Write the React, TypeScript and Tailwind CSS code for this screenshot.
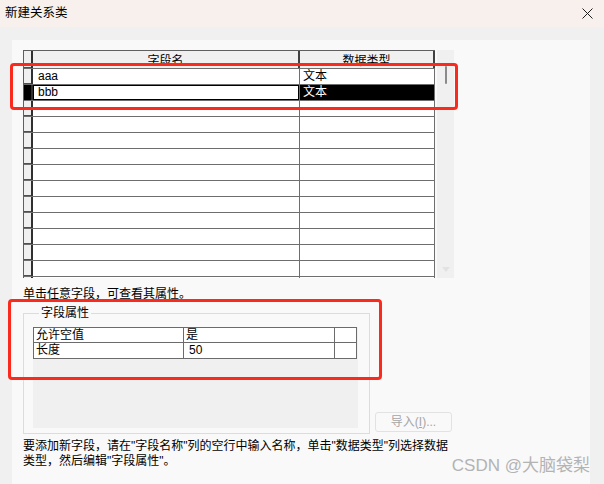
import React from 'react';

const ROWS = [
  { name: 'aaa', type: '文本', selected: false },
  { name: 'bbb', type: '文本', selected: true },
  ...Array.from({ length: 12 }, () => ({ name: '', type: '', selected: false })),
];

function FieldRow({ name, type, selected }: { name: string; type: string; selected: boolean }) {
  return (
    <div className="flex h-[16px] border-b border-[#6e6e6e]">
      <div
        className={
          selected
            ? 'w-[9px] bg-black border-r-2 border-[#303030]'
            : 'w-[9px] bg-[#f0f0f0] border-r-2 border-[#303030] shadow-[inset_0_-1px_0_#505050]'
        }
      />
      <div className="w-[267px] bg-white border-r border-[#6e6e6e]">
        {selected ? (
          <div className="h-full border border-black pl-[4px] leading-[13px]">{name}</div>
        ) : (
          <div className="h-full pl-[5px] leading-[15px]">{name}</div>
        )}
      </div>
      <div
        className={
          selected
            ? 'w-[135px] bg-black text-white pl-[3px] leading-[15px] border-r border-[#6e6e6e]'
            : 'w-[135px] bg-white pl-[3px] leading-[15px] border-r border-[#6e6e6e]'
        }
      >
        {type}
      </div>
    </div>
  );
}

export default function App() {
  return (
    <div className="relative w-[604px] h-[484px] overflow-hidden bg-[#f0f0f0] text-[12px] text-black font-['Liberation_Sans','Noto_Sans_CJK_SC',sans-serif]">
      {/* title bar */}
      <div className="flex h-[27px] items-center justify-between bg-[#f7f0ec] pl-[5px] pr-[11px]">
        <span className="text-[12.5px]">新建关系类</span>
        <svg width="11" height="11" viewBox="0 0 11 11">
          <path d="M0.5 0.5 L10.5 10.5 M10.5 0.5 L0.5 10.5" stroke="#1e1e1e" strokeWidth="1" fill="none" />
        </svg>
      </div>

      <div className="mt-[13px] ml-[12px] w-[578px] h-[444px] bg-[#f9f9f9] pt-[10px] pl-[11px]">
        {/* field grid + scrollbar */}
        <div className="flex h-[228px]">
          <div className="w-[412px] h-full overflow-hidden border-l border-t border-[#5f5f5f]">
            <div className="flex h-[18px] overflow-hidden border-b border-[#6e6e6e] bg-[#f0f0f0]">
              <div className="w-[9px] border-r-2 border-[#303030] shadow-[inset_0_-1px_0_#505050]" />
              <div className="w-[267px] border-r-2 border-[#404040] pt-[2px] text-center leading-[16px]">字段名</div>
              <div className="w-[135px] border-r-2 border-[#404040] pt-[2px] text-center leading-[16px]">数据类型</div>
            </div>
            {ROWS.map((r, i) => (
              <FieldRow key={i} {...r} />
            ))}
          </div>
          <div className="ml-[2px] flex w-[17px] h-full flex-col items-center bg-[#f0f0f0]">
            <div className="h-[16px]" />
            <div className="w-[2px] h-[18px] rounded bg-[#8a8a8a]" />
            <div className="flex-1" />
            <svg width="8" height="5" viewBox="0 0 8 5" className="mb-[6px]">
              <path d="M0 0 L8 0 L4 5 Z" fill="#e2e2e2" />
            </svg>
          </div>
        </div>

        <div className="mt-[9px] leading-[14px]">单击任意字段，可查看其属性。</div>

        {/* field properties */}
        <div className="mt-[5px] flex items-end">
          <fieldset className="w-[347px] border border-[#dcdcdc] pl-[9px] pb-[5px]">
            <legend className="ml-[6px] px-[2px] leading-[14px]">字段属性</legend>
            <div className="mt-[7px] w-[325px] h-[101px] bg-[#f0f0f0]">
              <div className="w-[324px] border border-[#6b6b6b] bg-white">
                <div className="flex h-[15px] border-b border-[#6b6b6b]">
                  <div className="w-[150px] border-r border-[#6b6b6b] pl-[2px] leading-[15px]">允许空值</div>
                  <div className="w-[151px] border-r border-[#6b6b6b] pl-[2px] leading-[15px]">是</div>
                  <div className="flex-1" />
                </div>
                <div className="flex h-[15px]">
                  <div className="w-[150px] border-r border-[#6b6b6b] pl-[2px] leading-[15px]">长度</div>
                  <div className="w-[151px] border-r border-[#6b6b6b] pl-[5px] leading-[15px]">50</div>
                  <div className="flex-1" />
                </div>
              </div>
            </div>
          </fieldset>
          <button className="ml-[5px] mb-[2px] h-[20px] w-[77px] rounded-[3px] border border-[#e2e2e2] bg-[#f9f9f9] text-[#a6a6a6] leading-[18px]">
            导入(<span className="underline">I</span>)...
          </button>
        </div>

        <div className="mt-[5px] leading-[15px]">
          <div>要添加新字段，请在"字段名称"列的空行中输入名称，单击"数据类型"列选择数据</div>
          <div>类型，然后编辑"字段属性"。</div>
        </div>
      </div>

      {/* annotations */}
      <div className="pointer-events-none absolute left-[10px] top-[63px] h-[47px] w-[448px] rounded-[4px] border-[3px] border-[#fa2a1c]" />
      <div className="pointer-events-none absolute left-[8px] top-[299px] h-[81px] w-[374px] rounded-[4px] border-[3px] border-[#fa2a1c]" />

      <div className="pointer-events-none absolute right-[14px] top-[456px] text-[17px] leading-[20px] text-[#b3b3b3]">
        CSDN @大脑袋梨
      </div>
    </div>
  );
}
